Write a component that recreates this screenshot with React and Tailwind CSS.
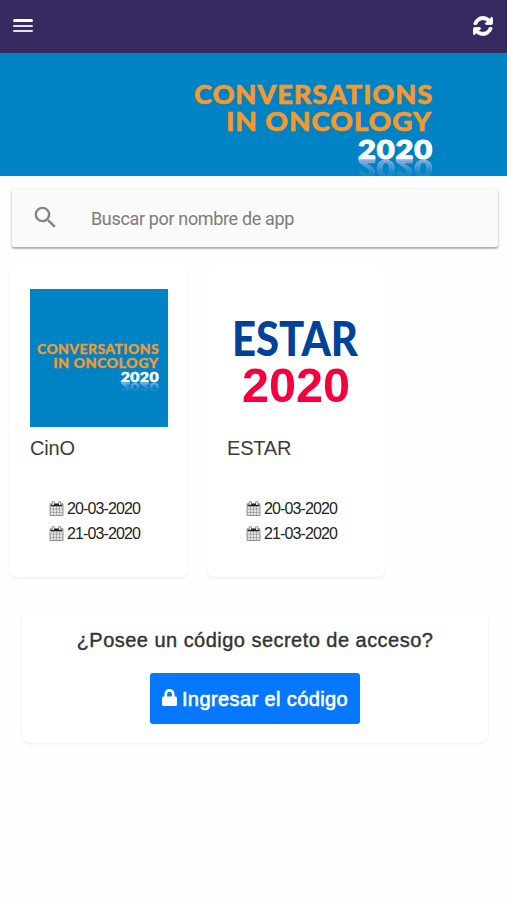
import { FaLock } from 'react-icons/fa';
import { MdSearch } from 'react-icons/md';

const apps = [
  { id: 'cino', name: 'CinO', start: '20-03-2020', end: '21-03-2020' },
  { id: 'estar', name: 'ESTAR', start: '20-03-2020', end: '21-03-2020' },
];

const RefreshIcon = ({ className }) => (
  <svg className={className} viewBox="-40 -40 1616 1616" fill="currentColor" stroke="currentColor" strokeWidth="70">
    <path d="M1511 928q0 5-1 7-64 268-268 434.5t-478 166.5q-146 0-282.5-55t-243.5-157l-129 129q-19 19-45 19t-45-19-19-45v-448q0-26 19-45t45-19h448q26 0 45 19t19 45-19 45l-137 137q71 66 161 102t187 36q134 0 250-65t186-179q11-17 53-117 8-23 30-23h192q13 0 22.5 9.5t9.5 22.5zm25-800v448q0 26-19 45t-45 19h-448q-26 0-45-19t-19-45 19-45l138-138q-148-137-349-137-134 0-250 65t-186 179q-11 17-53 117-8 23-30 23h-199q-13 0-22.5-9.5t-9.5-22.5v-7q65-268 270-434.5t480-166.5q146 0 284 55.5t245 156.5l130-129q19-19 45-19t45 19 19 45z" />
  </svg>
);

const CalendarIcon = ({ className }) => (
  <svg className={className} viewBox="64 0 1664 1792" fill="currentColor">
    <path d="M192 640h1408v1024H192z" fillOpacity="0.12" />
    <path fillOpacity="0.5" d="M192 1664h288v-288h-288v288zm352 0h320v-288h-320v288zm-352-352h288v-320h-288v320zm352 0h320v-320h-320v320zm-352-384h288v-288h-288v288zm736 736h320v-288h-320v288zm-384-736h320v-288h-320v288zm768 736h288v-288h-288v288zm-384-352h320v-320h-320v320zm-352-864v-288q0-13-9.5-22.5t-22.5-9.5h-64q-13 0-22.5 9.5t-9.5 22.5v288q0 13 9.5 22.5t22.5 9.5h64q13 0 22.5-9.5t9.5-22.5zm736 864h288v-320h-288v320zm-384-384h320v-288h-320v288zm384 0h288v-288h-288v288zm32-480v-288q0-13-9.5-22.5t-22.5-9.5h-64q-13 0-22.5 9.5t-9.5 22.5v288q0 13 9.5 22.5t22.5 9.5h64q13 0 22.5-9.5t9.5-22.5zm384-64v1280q0 52-38 90t-90 38h-1408q-52 0-90-38t-38-90v-1280q0-52 38-90t90-38h128v-96q0-66 47-113t113-47h64q66 0 113 47t47 113v96h384v-96q0-66 47-113t113-47h64q66 0 113 47t47 113v96h128q52 0 90 38t38 90z" />
    <path d="M600 340h590v280h-590zM230 470h1330v150h-1330z" />
  </svg>
);

const OncologyLogo = ({ className }) => (
  <svg className={className} viewBox="0 0 239 92" overflow="visible" fontFamily="Lato, sans-serif" fontWeight="900">
    <defs>
      <linearGradient id="fade" x1="0" y1="0" x2="0" y2="1">
        <stop offset="0" stopColor="#b4bce8" stopOpacity="0" />
        <stop offset="0.4" stopColor="#b4bce8" stopOpacity="0.15" />
        <stop offset="1" stopColor="#b4bce8" stopOpacity="0.9" />
      </linearGradient>
    </defs>
    <g fill="#f7992a" stroke="#f7992a" strokeWidth="0.5" fontSize="26" letterSpacing="0.8">
      <text x="0" y="19.5" textLength="239" lengthAdjust="spacingAndGlyphs">CONVERSATIONS</text>
      <text x="32" y="46.5" textLength="206" lengthAdjust="spacingAndGlyphs">IN ONCOLOGY</text>
    </g>
    <g fontSize="26.5" letterSpacing="0.8">
      <text x="164" y="74.5" fill="#fff" stroke="#fff" strokeWidth="1.2" textLength="75" lengthAdjust="spacingAndGlyphs">2020</text>
      {/* mirrored reflection under the year */}
      <text x="164" y="0" transform="translate(0 76) scale(1 -0.85)" fill="url(#fade)" stroke="url(#fade)" strokeWidth="1" textLength="75" lengthAdjust="spacingAndGlyphs" aria-hidden="true">2020</text>
    </g>
  </svg>
);

const EstarLogo = () => (
  <svg className="w-[138px] h-[138px]" viewBox="0 0 138 138" overflow="visible">
    <text x="5" y="67" fontFamily="Lato, sans-serif" fontWeight="900" fontSize="47" fill="#00429a" textLength="126" lengthAdjust="spacingAndGlyphs">ESTAR</text>
    <text x="15" y="113" fontFamily="Liberation Sans, sans-serif" fontWeight="700" fontSize="48" fill="#f5003d" textLength="108" lengthAdjust="spacingAndGlyphs">2020</text>
  </svg>
);

const AppCard = ({ app }) => (
  <div className="w-[178px] h-[312px] px-[20px] pt-[24px] rounded-lg bg-white shadow-[0_2px_3px_rgba(0,0,0,0.05)]">
    {app.id === 'cino' ? (
      <div className="w-[138px] h-[138px] bg-[#0083c5] flex flex-col items-end pt-[55px] pr-[9px]">
        <OncologyLogo className="w-[122px] h-[47px]" />
      </div>
    ) : (
      <EstarLogo />
    )}
    <h3 className="mt-[9px] text-[20px] leading-6 tracking-[-0.2px] text-[#3c3c3c]">{app.name}</h3>
    <div className="mt-[36px] pl-[19px] flex flex-col text-[16px] leading-[25px] text-[#222]">
      {[app.start, app.end].map((date) => (
        <div key={date} className="flex items-center gap-[3px]">
          <CalendarIcon className="w-[15px] h-[15px]" />
          <span className="tracking-[-0.87px]">{date}</span>
        </div>
      ))}
    </div>
  </div>
);

export default function App() {
  return (
    <div className="w-full h-[900px] flex flex-col bg-[#fefefe] font-['Liberation_Sans',sans-serif] overflow-hidden">
      <header className="h-[53px] shrink-0 bg-[#35295f] flex items-center justify-between pl-[13px] pr-[14px] text-white">
        <button className="flex flex-col gap-[3px] w-5 pb-[3px]">
          <span className="h-[3px] w-full rounded-full bg-white" />
          <span className="h-[2px] w-full rounded-full bg-[#e4e0ee]" />
          <span className="h-[2px] w-full rounded-full bg-[#e4e0ee]" />
        </button>
        <RefreshIcon className="w-5 h-5 mb-[2px]" />
      </header>

      <div className="h-[123px] shrink-0 bg-[#0083c5] flex justify-end pt-[31px] pr-[74px]">
        <OncologyLogo className="w-[239px] h-[92px]" />
      </div>

      <div className="mt-[13px] ml-[12px] mr-[9px] h-[58px] shrink-0 flex items-center pl-[19px] rounded-[2px] bg-[#fafafa] shadow-[0_1px_3px_rgba(0,0,0,0.3),0_2px_1px_rgba(0,0,0,0.15)]">
        <MdSearch className="w-[29px] h-[29px] mb-[2px] text-[#858585]" />
        <span className="ml-[31px] font-[Roboto,sans-serif] text-[18px] tracking-[-0.35px] text-[#7d7d7d]">Buscar por nombre de app</span>
      </div>

      <div className="mt-[18px] ml-[10px] flex gap-[19px]">
        {apps.map((app) => (
          <AppCard key={app.id} app={app} />
        ))}
      </div>

      <div className="mt-[33px] ml-[22px] mr-[19px] h-[133px] shrink-0 rounded-lg bg-white shadow-[0_1px_3px_rgba(0,0,0,0.08)] flex flex-col items-center pt-[18px]">
        <p className="text-[20px] leading-6 tracking-[0.47px] text-[#333] [-webkit-text-stroke:0.4px_#333]">¿Posee un código secreto de acceso?</p>
        <button className="mt-[21px] w-[210px] h-[51px] rounded-[3px] bg-[#0578ff] text-white flex items-center justify-center gap-[5px] text-[20px]">
          <FaLock className="w-[15px] h-[17px] mb-[2px]" />
          <span className="tracking-[0.4px] [-webkit-text-stroke:0.6px_#fff]">Ingresar el código</span>
        </button>
      </div>
    </div>
  );
}
